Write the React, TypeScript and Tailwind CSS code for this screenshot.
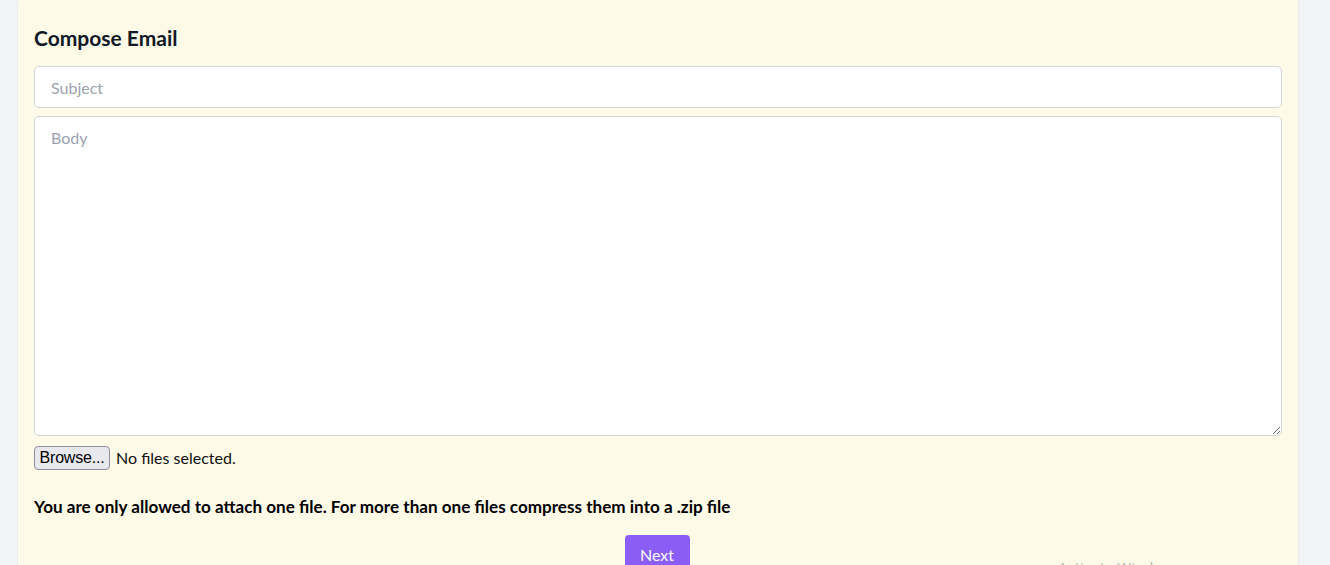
import React from "react";

export default function App() {
  return (
    <div className="relative min-h-[565px] w-[1330px] overflow-hidden bg-[#f3f4f6]" style={{ fontFamily: "Lato, 'Noto Sans', sans-serif" }}>
      <div className="ml-[18px] w-[1280px] min-h-[565px] bg-[#fefae8] px-4 pt-6 pb-4 shadow-[0_0_2px_rgba(0,0,0,0.12)]">
        <h2 className="mb-[14px] text-[21px] font-bold leading-7 text-[#111827]">Compose Email</h2>
        <div className="flex flex-col gap-2">
          <input
            className="h-[42px] w-full rounded-[5px] border border-[#d1d5db] bg-white px-4 text-[16px] text-[#111827] placeholder:text-[#9ca3af] outline-none"
            placeholder="Subject"
          />
          <textarea
            className="h-[320px] w-full resize-y rounded-[5px] border border-[#d1d5db] bg-white px-4 pt-[9px] pb-2 text-[16px] leading-6 text-[#111827] placeholder:text-[#9ca3af] outline-none"
            placeholder="Body"
          />
        </div>
        <div className="mt-[10px] flex items-center gap-[6px]">
          <button className="h-[24px] w-[76px] rounded-[4px] border border-[#8f8f9d] bg-[#e9e9ed] px-0 text-[16px] leading-none tracking-[-0.2px] text-black" style={{ fontFamily: "'Liberation Sans', Arial, sans-serif" }}>
            Browse...
          </button>
          <span className="text-[16px] text-[#111]">No files selected.</span>
        </div>
        <p className="mt-[25px] text-[17.1px] font-bold leading-6 text-black">
          You are only allowed to attach one file. For more than one files compress them into a .zip file
        </p>
        <div className="mt-4 flex justify-center">
          <button className="-ml-[2px] w-[65px] rounded-[4px] bg-[#8b5cf6] py-2 text-[16px] leading-6 text-white">Next</button>
        </div>
      </div>
      <div className="pointer-events-none absolute left-[1058px] top-[557px] text-[15px] leading-5 text-[#b5b5b5]" style={{ fontFamily: "'Open Sans', sans-serif" }}>
        Activate Windows
      </div>
    </div>
  );
}
